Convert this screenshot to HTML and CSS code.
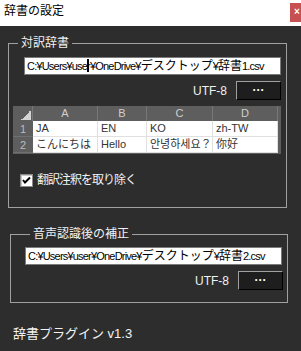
FILE: index.html
```html
<!DOCTYPE html>
<html lang="ja">
<head>
    <meta charset="UTF-8">
    <meta name="viewport" content="width=device-width, initial-scale=1.0">
    <title>辞書の設定</title>
    <link rel="stylesheet" href="styles.css">
</head>
<body>
    <div class="titlebar">
        <span class="title">辞書の設定</span>
        <span class="close">×</span>
    </div>

    <div class="content">
        <fieldset class="group dict">
            <legend>対訳辞書</legend>
            <div class="path">C:¥Users¥use<span class="caret"></span>r¥OneDrive¥<span class="ja">デスクトップ</span>¥<span class="ja">辞書</span>1.csv</div>
            <div class="encoding-row">
                <span class="encoding">UTF-8</span>
                <button class="browse">···</button>
            </div>
            <div class="sheet">
                <div class="corner"></div>
                <div class="col-head">A</div>
                <div class="col-head">B</div>
                <div class="col-head">C</div>
                <div class="col-head">D</div>

                <div class="row-head">1</div>
                <div class="cell">JA</div>
                <div class="cell">EN</div>
                <div class="cell">KO</div>
                <div class="cell">zh-TW</div>

                <div class="row-head">2</div>
                <div class="cell">こんにちは</div>
                <div class="cell">Hello</div>
                <div class="cell">안녕하세요？</div>
                <div class="cell">你好</div>
            </div>
            <label class="check">
                <span class="box">
                    <svg width="11" height="11" viewBox="0 0 11 11"><path d="M2 5 L4 7.5 L9 2.5" fill="none" stroke="#000" stroke-width="2"/></svg>
                </span>
                翻訳注釈を取り除く
            </label>
        </fieldset>

        <fieldset class="group fix">
            <legend>音声認識後の補正</legend>
            <div class="path">C:¥Users¥user¥OneDrive¥<span class="ja">デスクトップ</span>¥<span class="ja">辞書</span>2.csv</div>
            <div class="encoding-row">
                <span class="encoding">UTF-8</span>
                <button class="browse">···</button>
            </div>
        </fieldset>

        <div class="version">辞書プラグイン v1.3</div>
    </div>
</body>
</html>
```

FILE: styles.css
```css
* {
    margin: 0;
    padding: 0;
    box-sizing: border-box;
    font-family: "Liberation Sans", "Noto Sans CJK JP", sans-serif;
}

body {
    width: 301px;
    height: 351px;
    overflow: hidden;
    background: #2d2d2d;
    color: #f2f2f2;
    font-size: 12px;
}

.titlebar {
    height: 26px;
    background: #fff;
    display: flex;
    justify-content: space-between;
    align-items: flex-start;
}

.titlebar .title {
    color: #000;
    font-size: 12px;
    line-height: 14px;
    margin: 4px 0 0 4px;
}

.titlebar .close {
    flex-shrink: 0;
    width: 11px;
    height: 19px;
    margin-top: 3px;
    padding-left: 4px;
    background: #c75050;
    color: #fff;
    font-size: 10px;
    font-weight: bold;
    line-height: 18px;
}

.content {
    padding: 11px 0 0 8px;
}

.group {
    border: 1px solid #a0a0a0;
    padding: 0;
}

.group legend {
    margin-left: 5px;
    padding: 0 3px;
    font-size: 12px;
    line-height: 13px;
}

.dict {
    width: 279px;
    padding: 0 0 20px 4px;
}

.fix {
    width: 278px;
    margin: 20px 0 0 2px;
    padding: 0 0 12px 14px;
}

.path {
    width: 257px;
    height: 18px;
    margin-top: 7px;
    background: #fff;
    border: 1px solid #7a7a7a;
    color: #000;
    font-size: 11px;
    letter-spacing: -0.8px;
    line-height: 16px;
    padding-left: 2px;
    white-space: nowrap;
    overflow: hidden;
}

.path .ja {
    font-size: 12px;
    letter-spacing: 0;
}

.dict .path {
    margin-left: 11px;
}

.fix .path {
    margin-top: 6px;
}

.caret {
    display: inline-block;
    width: 2px;
    height: 13px;
    margin-right: -2px;
    background: #000;
    vertical-align: -2px;
}

.encoding-row {
    display: flex;
    justify-content: flex-end;
    align-items: center;
    gap: 9px;
    margin-top: 6px;
}

.dict .encoding-row {
    width: 268px;
}

.fix .encoding-row {
    width: 258px;
}

.encoding {
    font-size: 12px;
}

.browse {
    width: 45px;
    height: 19px;
    background: #1e1e1e;
    border: 1px solid #a0a0a0;
    border-right-color: #000;
    border-bottom-color: #000;
    color: #fff;
    font-size: 12px;
    font-weight: bold;
    line-height: 15px;
}

.sheet {
    display: grid;
    grid-template-columns: 20px 65px 49px 66px 65px;
    grid-template-rows: 15px 16px 16px;
    width: 268px;
    margin-top: 6px;
    padding: 0 3px 1px 0;
    background: #5e5e5e;
    font-size: 11px;
}

.corner {
    background: linear-gradient(to bottom right, transparent 50%, #d4d4d4 50%) no-repeat right 1px bottom 1px / 10px 10px;
    border-right: 1px solid #777;
}

.col-head {
    color: #cfcfcf;
    text-align: center;
    line-height: 15px;
    border-right: 1px solid #777;
}

.row-head {
    color: #bcbcbc;
    text-align: center;
    line-height: 16px;
    border-bottom: 1px solid #707070;
}

.cell {
    background: #fff;
    color: #333;
    line-height: 15px;
    padding-left: 3px;
    border-right: 1px solid #e0e0e0;
    border-bottom: 1px solid #e0e0e0;
    white-space: nowrap;
    overflow: hidden;
}

.check {
    display: flex;
    align-items: center;
    gap: 4px;
    margin: 20px 0 0 7px;
    font-size: 12px;
    line-height: 13px;
    letter-spacing: -1px;
}

.box {
    display: flex;
    align-items: center;
    justify-content: center;
    width: 13px;
    height: 13px;
    background: #fff;
    border: 1px solid #8a8a8a;
    box-shadow: inset 1px 1px 0 #c8c8c8;
}

.version {
    margin: 23px 0 0 5px;
    font-size: 13px;
    line-height: 15px;
}
```
